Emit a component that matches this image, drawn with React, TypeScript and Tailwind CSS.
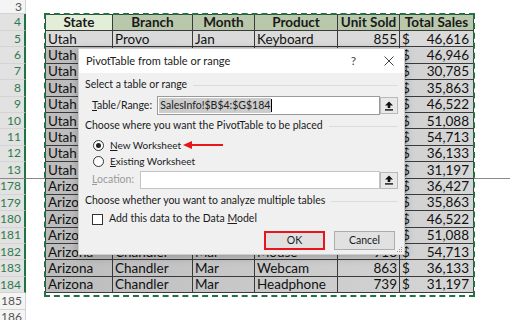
import React from 'react';

type Row = {
  n: number;
  state: string;
  branch: string;
  month: string;
  product: string;
  units: number;
  sales: string;
};

const rows: Row[] = [
  { n: 5, state: 'Utah', branch: 'Provo', month: 'Jan', product: 'Keyboard', units: 855, sales: '46,616' },
  { n: 6, state: 'Utah', branch: 'Provo', month: 'Jan', product: 'Mouse', units: 912, sales: '46,946' },
  { n: 7, state: 'Utah', branch: 'Provo', month: 'Jan', product: 'Webcam', units: 604, sales: '30,785' },
  { n: 8, state: 'Utah', branch: 'Provo', month: 'Feb', product: 'Headphone', units: 701, sales: '35,863' },
  { n: 9, state: 'Utah', branch: 'Provo', month: 'Feb', product: 'Keyboard', units: 910, sales: '46,522' },
  { n: 10, state: 'Utah', branch: 'Orem', month: 'Feb', product: 'Mouse', units: 998, sales: '51,088' },
  { n: 11, state: 'Utah', branch: 'Orem', month: 'Mar', product: 'Webcam', units: 918, sales: '54,713' },
  { n: 12, state: 'Utah', branch: 'Orem', month: 'Mar', product: 'Headphone', units: 863, sales: '36,133' },
  { n: 13, state: 'Utah', branch: 'Orem', month: 'Mar', product: 'Keyboard', units: 739, sales: '31,197' },
  { n: 178, state: 'Arizona', branch: 'Mesa', month: 'Jan', product: 'Keyboard', units: 711, sales: '36,427' },
  { n: 179, state: 'Arizona', branch: 'Mesa', month: 'Feb', product: 'Headphone', units: 701, sales: '35,863' },
  { n: 180, state: 'Arizona', branch: 'Mesa', month: 'Feb', product: 'Keyboard', units: 910, sales: '46,522' },
  { n: 181, state: 'Arizona', branch: 'Chandler', month: 'Feb', product: 'Mouse', units: 998, sales: '51,088' },
  { n: 182, state: 'Arizona', branch: 'Chandler', month: 'Mar', product: 'Mouse', units: 918, sales: '54,713' },
  { n: 183, state: 'Arizona', branch: 'Chandler', month: 'Mar', product: 'Webcam', units: 863, sales: '36,133' },
  { n: 184, state: 'Arizona', branch: 'Chandler', month: 'Mar', product: 'Headphone', units: 739, sales: '31,197' },
];

const cellFont = { fontFamily: 'Lato, "Liberation Sans", sans-serif' };
const uiFont = { fontFamily: 'Lato, "Noto Sans", sans-serif' };

const RowHead = ({ n, selected, h }: { n: number; selected: boolean; h: string }) => (
  <div
    className={`${h} w-[26px] shrink-0 flex items-center justify-end pr-[3px] text-[12px] border-b border-[#d4d4d4] ${
      selected ? 'bg-[#e2e2e2] text-[#2f7a4c] border-r-2 border-r-[#217346]' : 'bg-[#f4f4f4] text-[#555] border-r border-r-[#d4d4d4]'
    }`}
  >
    {n}
  </div>
);

const UploadIcon = () => (
  <svg width="10" height="10" viewBox="0 0 10 10">
    <path d="M5 0.5 L9 4.5 L6.3 4.5 L6.3 7 L3.7 7 L3.7 4.5 L1 4.5 Z" fill="#111" />
    <rect x="1" y="8.2" width="8" height="1.4" fill="#111" />
  </svg>
);

const RangeButton = () => (
  <div className="w-[18px] h-[17px] bg-[#e8e8e8] border border-[#b9b9b9] flex items-center justify-center">
    <UploadIcon />
  </div>
);

const SectionTitle = ({ children }: { children: React.ReactNode }) => (
  <div className="flex items-center gap-[6px] h-[16px]">
    <span className="whitespace-nowrap">{children}</span>
    <div className="flex-1 h-px bg-[#dcdcdc]" />
  </div>
);

const Dialog = () => (
  <div
    className="absolute left-[78px] top-[48px] w-[327px] h-[207px] bg-[#f0f0f0] border border-[#cfcfcf] shadow-[0_2px_8px_rgba(0,0,0,0.25)] flex flex-col text-[10.5px] text-[#1a1a1a] z-20"
    style={uiFont}
  >
    <div className="h-[24px] bg-white flex items-center pl-[7px] shrink-0">
      <span className="text-[11px] text-[#222]">PivotTable from table or range</span>
      <span className="ml-auto text-[12px] text-[#444] mr-[28px]">?</span>
      <span className="mr-[10px] text-[#444]">
        <svg width="10" height="10" viewBox="0 0 10 10">
          <path d="M0.5 0.5 L9.5 9.5 M9.5 0.5 L0.5 9.5" stroke="#444" strokeWidth="1" />
        </svg>
      </span>
    </div>
    <div className="flex-1 flex flex-col px-[6px] pt-[4px] relative">
      <SectionTitle>Select a table or range</SectionTitle>
      <div className="flex items-center mt-[3px] pl-[7px]">
        <span className="w-[66px] whitespace-nowrap">
          <u>T</u>able/Range:
        </span>
        <div className="w-[225px] h-[19px] bg-white border border-[#9a9a9a] flex items-center px-[1px]">
          <span className="bg-[#cccccc] text-[10.5px] leading-[15px] px-[1px] text-[#222]">SalesInfo!$B$4:$G$184</span>
          <span className="w-px h-[13px] bg-black" />
        </div>
        <RangeButton />
      </div>
      <div className="mt-[3px]">
        <SectionTitle>Choose where you want the PivotTable to be placed</SectionTitle>
      </div>
      <div className="flex items-center pl-[8px] mt-[3px] h-[16px] relative">
        <span className="w-[11px] h-[11px] rounded-full border border-[#333] bg-white flex items-center justify-center">
          <span className="w-[5px] h-[5px] rounded-full bg-[#222]" />
        </span>
        <span className="ml-[6px] text-[10px]">
          <u>N</u>ew Worksheet
        </span>
        <svg className="absolute left-[98px] top-[3px]" width="40" height="10" viewBox="0 0 40 10">
          <path d="M0 5 L9 1 L9 9 Z" fill="#e8161b" />
          <rect x="8" y="4" width="32" height="2" fill="#e8161b" />
        </svg>
      </div>
      <div className="flex items-center pl-[8px] h-[16px]">
        <span className="w-[11px] h-[11px] rounded-full border border-[#333] bg-white" />
        <span className="ml-[6px] text-[10px]">
          <u>E</u>xisting Worksheet
        </span>
      </div>
      <div className="flex items-center pl-[7px] mt-[2px]">
        <span className="w-[48px] text-[#9a9a9a]">
          <u>L</u>ocation:
        </span>
        <div className="w-[243px] h-[18px] bg-white border border-[#c4c4c4]" />
        <RangeButton />
      </div>
      <div className="mt-[4px]">
        <SectionTitle>Choose whether you want to analyze multiple tables</SectionTitle>
      </div>
      <div className="flex items-center pl-[7px] mt-[2px] h-[16px]">
        <span className="w-[11px] h-[11px] border border-[#333] bg-white" />
        <span className="ml-[6px]">
          Add this data to the Data <u>M</u>odel
        </span>
      </div>
      <div className="flex justify-end gap-[9px] mt-[4px] pr-[3px]">
        <div className="w-[61px] h-[19px] bg-[#e1e1e1] border-2 border-[#e8161b] flex items-center justify-center">OK</div>
        <div className="w-[61px] h-[19px] bg-[#e1e1e1] border border-[#adadad] flex items-center justify-center">Cancel</div>
      </div>
      <div className="absolute right-[2px] bottom-[2px] grid grid-cols-3 gap-[1px]">
        <span />
        <span />
        <span className="w-px h-px bg-[#999]" />
        <span />
        <span className="w-px h-px bg-[#999]" />
        <span className="w-px h-px bg-[#999]" />
        <span className="w-px h-px bg-[#999]" />
        <span className="w-px h-px bg-[#999]" />
        <span className="w-px h-px bg-[#999]" />
      </div>
    </div>
  </div>
);

const DataRow = ({ r }: { r: Row }) => {
  const cell = 'h-full flex items-center border-r border-b border-[#3a3a3a] px-[2px] overflow-hidden whitespace-nowrap';
  const bg = r.n === 5 ? 'bg-[#dadada]' : 'bg-gradient-to-r from-[#bcbcbc] to-[#d6d6d6]';
  const breakLine = r.n === 13;
  return (
    <div className="flex h-[16.4px]">
      <RowHead n={r.n} selected h={`h-full ${breakLine ? 'border-b-[#8a8a8a]' : ''}`} />
      <div className={`w-[19px] shrink-0 h-full bg-white ${breakLine ? 'border-b border-[#8a8a8a]' : ''}`} />
      <div className={`flex h-full text-[13.5px] text-[#111] ${bg}`} style={cellFont}>
        <div className={`${cell} w-[68px] border-l border-l-[#3a3a3a]`}>{r.state}</div>
        <div className={`${cell} w-[80px]`}>{r.branch}</div>
        <div className={`${cell} w-[62px]`}>{r.month}</div>
        <div className={`${cell} w-[83px]`}>{r.product}</div>
        <div className={`${cell} w-[62px] justify-end`}>{r.units}</div>
        <div className={`${cell} w-[74px] justify-between`}>
          <span>$</span>
          <span className="pr-[2px]">{r.sales}</span>
        </div>
      </div>
      <div className="flex-1 h-full">
        {breakLine && <div className="w-[36px] h-full border-b border-[#8a8a8a]" />}
      </div>
    </div>
  );
};

export default function App() {
  const head = 'h-full flex items-center justify-center border-r border-b border-[#3a3a3a] font-bold';
  return (
    <div className="w-[517px] h-[320px] bg-white overflow-hidden relative select-none" style={cellFont}>
      <div className="flex flex-col">
        <div className="flex h-[14px]">
          <div className="h-full w-[26px] shrink-0 flex items-center justify-end pr-[3px] text-[12px] bg-[#f4f4f4] text-[#555] border-r border-b border-[#d4d4d4]">
            3
          </div>
        </div>
        <div className="flex h-[17px]">
          <RowHead n={4} selected h="h-full" />
          <div className="w-[19px] shrink-0 h-full bg-white" />
          <div className="flex h-full text-[13.5px] text-[#1a1a1a] border-t border-[#3a3a3a]">
            <div className={`${head} w-[68px] bg-[#e3eed9] border-l border-l-[#3a3a3a]`}>State</div>
            <div className={`${head} w-[80px] bg-[#b9c7ab]`}>Branch</div>
            <div className={`${head} w-[62px] bg-[#b9c7ab]`}>Month</div>
            <div className={`${head} w-[83px] bg-[#b9c7ab]`}>Product</div>
            <div className={`${head} w-[62px] bg-[#b9c7ab]`}>Unit Sold</div>
            <div className={`${head} w-[74px] bg-[#b9c7ab]`}>Total Sales</div>
          </div>
        </div>
        {rows.map((r) => (
          <DataRow key={r.n} r={r} />
        ))}
        <div className="flex h-[16.4px]">
          <div className="h-full w-[26px] shrink-0 flex items-center justify-end pr-[3px] text-[12px] bg-[#f4f4f4] text-[#555] border-r border-b border-[#d4d4d4]">
            185
          </div>
        </div>
        <div className="flex h-[16.4px]">
          <div className="h-full w-[26px] shrink-0 flex items-center justify-end pr-[3px] text-[12px] bg-[#f4f4f4] text-[#555] border-r border-b border-[#d4d4d4]">
            186
          </div>
        </div>
      </div>
      <div className="absolute left-[44px] top-[13px] w-[431px] h-[284px] border-2 border-dashed border-[#217346] pointer-events-none z-10" />
      <Dialog />
    </div>
  );
}
